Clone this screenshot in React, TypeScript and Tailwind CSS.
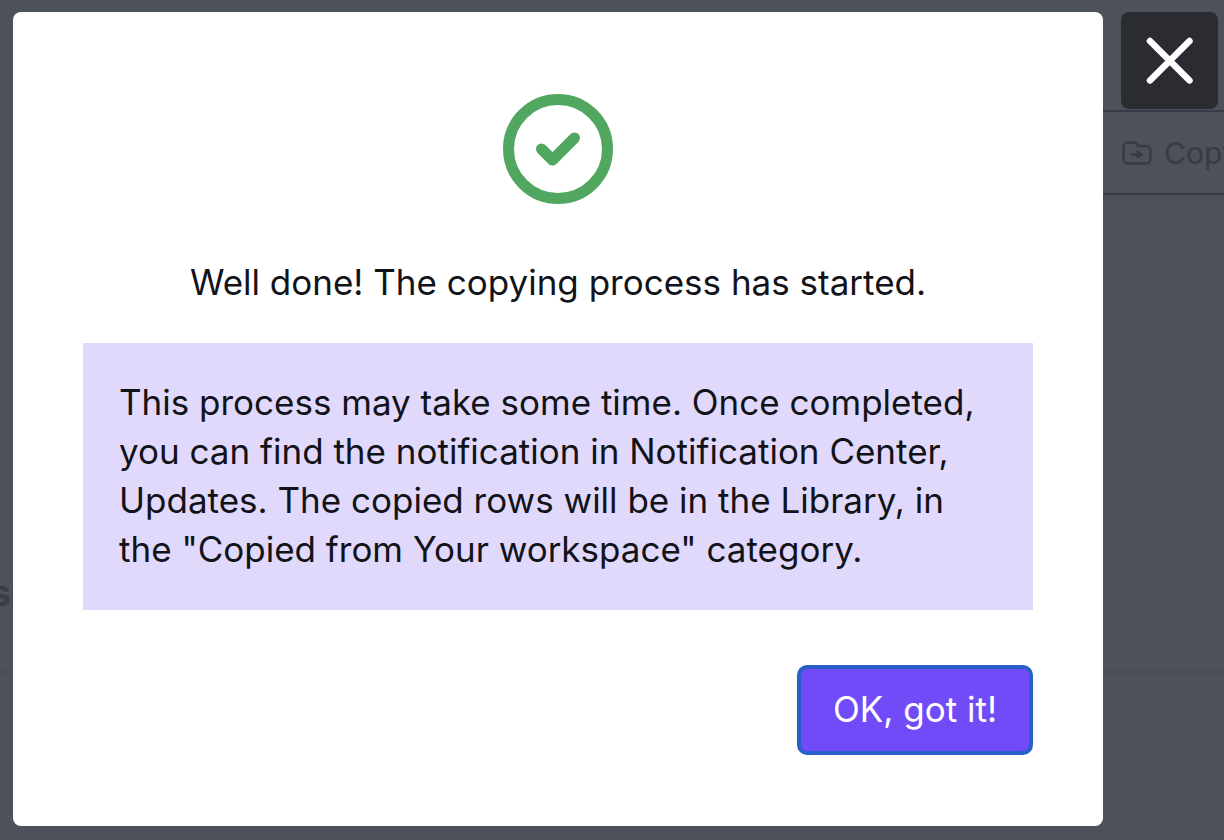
function FolderIcon() {
  return (
    <svg className="h-[26px] w-[30px] shrink-0" viewBox="0 0 30 26" fill="none" stroke="currentColor" strokeWidth="2.500" strokeLinecap="round" strokeLinejoin="round" aria-hidden="true">
      <path d="M1.500 6.500a4 4 0 0 1 4-4h5.500c1.600 0 2.500.5 3.500 1.500l1 1c.8.8 1.500 1 2.500 1H24a4.500 4.500 0 0 1 4.500 4.500V19a4.500 4.500 0 0 1-4.500 4.500H6A4.500 4.500 0 0 1 1.500 19Z" />
      <path d="M10 14.500h8" />
      <path d="M15.500 11.500l4.500 3-4.500 3Z" fill="currentColor" strokeWidth="2" />
    </svg>
  );
}

function SuccessIcon() {
  return (
    <svg className="size-[110px]" viewBox="0 0 110 110" fill="none" stroke="#51a760" strokeWidth="11" strokeLinecap="round" strokeLinejoin="round" aria-hidden="true">
      <circle cx="55" cy="55" r="49.500" />
      <path d="M38.500 55 L49.500 66 L71.500 44" />
    </svg>
  );
}

function CloseIcon() {
  return (
    <svg className="size-12" viewBox="0 0 48 48" fill="none" stroke="white" strokeWidth="6.500" strokeLinecap="round" aria-hidden="true">
      <path d="M4 4 L43.500 43.500 M43.500 4 L4 43.500" />
    </svg>
  );
}

function PageBehind() {
  return (
    <div className="flex h-screen flex-col overflow-hidden bg-[#4d5159]" aria-hidden="true">
      <div className="h-[110px] shrink-0 bg-[#4d5159]">
        <div className="h-14 border-b-2 border-[#4c4f57]" />
      </div>
      <div className="flex h-[85px] w-1/2 shrink-0 justify-end self-end overflow-hidden border-y-2 border-[#383a47] bg-[#4d5159]">
        <div className="flex w-[102px] shrink-0 items-center gap-3 whitespace-nowrap text-[30px] leading-10 text-[#383a47]">
          <FolderIcon />
          <span>Copy</span>
        </div>
      </div>
      <div className="h-[124px] shrink-0 bg-[#4c5058]" />
      <div className="h-[242px] shrink-0 bg-[#4e5159]" />
      <div className="flex h-16 shrink-0 items-center bg-[#4d5058]">
        <span className="flex w-[11px] justify-end whitespace-nowrap text-[36px] leading-10 font-bold text-[#3a3d45]">s</span>
      </div>
      <div className="h-[50px] shrink-0 border-b-[6px] border-[#4c4e57] bg-[#4e5159]" />
    </div>
  );
}

export default function App() {
  return (
    <div className="relative font-['Inter','Liberation_Sans',sans-serif]">
      <PageBehind />
      <div className="absolute inset-0 flex items-start gap-[18px] pt-3 pr-1.5 pl-[13px]">
        <section
          role="dialog"
          aria-modal="true"
          aria-labelledby="dialog-title"
          className="flex min-w-0 flex-1 flex-col items-center rounded-lg bg-white px-[70px] pt-[82px] pb-[71px] text-[35px] leading-[49px] text-[#111319]"
        >
          <SuccessIcon />
          <h1 id="dialog-title" className="mt-[54px] text-center">
            Well done! The copying process has started.
          </h1>
          <p className="mt-9 w-full bg-[#e1d9fc] px-9 pt-[35px] pb-9">
            This process may take some time. Once completed, you can find the notification in Notification Center, Updates. The copied rows will be in the Library, in the "Copied from Your workspace" category.
          </p>
          <button type="button" className="mt-[55px] self-end rounded-[10px] border-4 border-[#285fc8] bg-[#714bf7] px-8 pt-4 pb-[17px] text-white">
            OK, got it!
          </button>
        </section>
        <button type="button" aria-label="Close" className="flex size-[97px] shrink-0 items-center justify-center rounded-lg bg-[#2b2c31]">
          <CloseIcon />
        </button>
      </div>
    </div>
  );
}
